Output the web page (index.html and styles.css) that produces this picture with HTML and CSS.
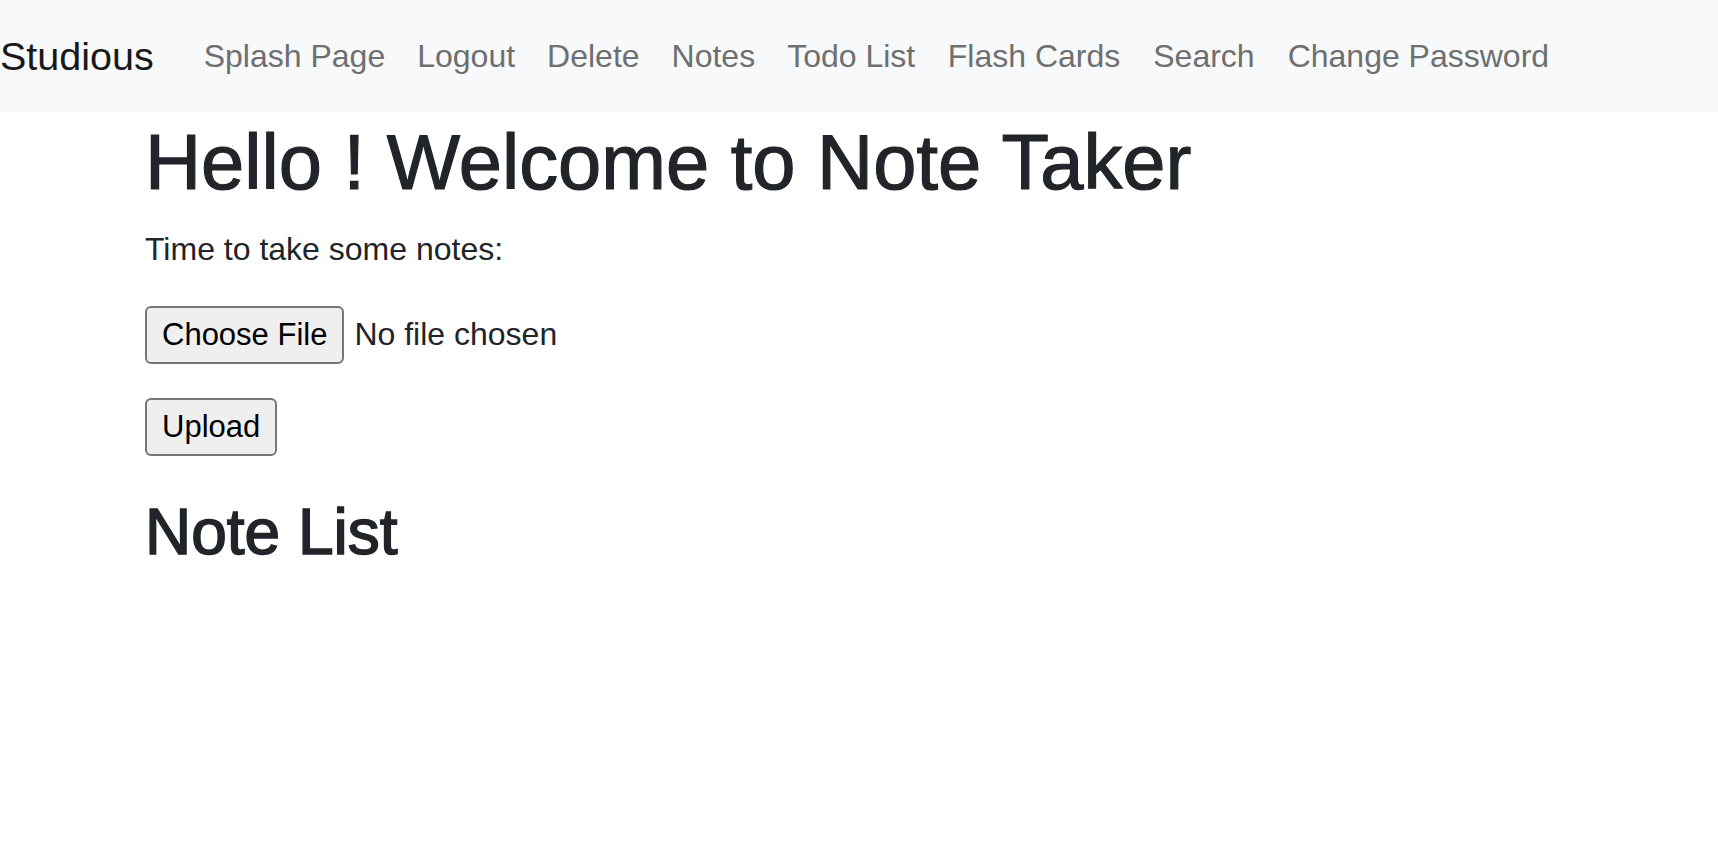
FILE: index.html
```html
<!DOCTYPE html>
<html lang="en">
<head>
<meta charset="utf-8">
<title>Note Taker</title>
<link rel="stylesheet" href="styles.css">
</head>
<body>
<nav class="navbar">
  <a class="brand" href="#">Studious</a>
  <ul class="nav-links">
    <li><a href="#">Splash Page</a></li>
    <li><a href="#">Logout</a></li>
    <li><a href="#">Delete</a></li>
    <li><a href="#">Notes</a></li>
    <li><a href="#">Todo List</a></li>
    <li><a href="#">Flash Cards</a></li>
    <li><a href="#">Search</a></li>
    <li><a href="#">Change Password</a></li>
  </ul>
</nav>
<main class="content">
  <h1 class="title">Hello ! Welcome to Note Taker</h1>
  <p class="lead">Time to take some notes:</p>
  <form class="upload-form">
    <div class="file-row">
      <button type="button" class="btn">Choose File</button>
      <span class="file-name">No file chosen</span>
    </div>
    <div class="submit-row">
      <button type="submit" class="btn">Upload</button>
    </div>
  </form>
  <h2 class="section-title">Note List</h2>
</main>
</body>
</html>
```

FILE: styles.css
```css
* {
  box-sizing: border-box;
}

body {
  margin: 0;
  font-family: "Liberation Sans", Arial, sans-serif;
  color: #212529;
  background: #ffffff;
}

.navbar {
  height: 112px;
  background: #f8f9fa;
  display: flex;
  align-items: center;
}

.brand {
  font-size: 39.5px;
  color: #191919;
  text-decoration: none;
  margin-right: 34px;
}

.nav-links {
  list-style: none;
  margin: 0;
  padding: 0;
  display: flex;
  align-items: center;
}

.nav-links a {
  display: block;
  padding: 0 16px;
  font-size: 32px;
  color: #6e6f70;
  text-decoration: none;
}

.nav-links li:nth-child(n+6) a {
  padding: 0 16.5px;
}

.content {
  padding-left: 145px;
}

.title {
  font-size: 77.7px;
  font-weight: 400;
  line-height: 1.2;
  margin: 4px 0 16px;
  color: #212529;
  -webkit-text-stroke: 1.2px #212529;
}

.lead {
  font-size: 32px;
  line-height: 48px;
  margin: 0 0 33px;
}

.file-row {
  display: flex;
  align-items: baseline;
  gap: 10px;
}

.submit-row {
  margin-top: 34px;
  display: flex;
}

.btn {
  font-family: "Liberation Sans", Arial, sans-serif;
  font-size: 31px;
  line-height: 34px;
  color: #000000;
  background: #efefef;
  border: 2px solid #767676;
  border-radius: 6px;
  padding: 10px 15px;
}

.file-name {
  font-size: 32px;
  color: #212529;
}

.section-title {
  font-size: 64px;
  font-weight: 400;
  line-height: 1.2;
  margin: 38px 0 0;
  color: #212529;
  -webkit-text-stroke: 1.6px #212529;
}
```
